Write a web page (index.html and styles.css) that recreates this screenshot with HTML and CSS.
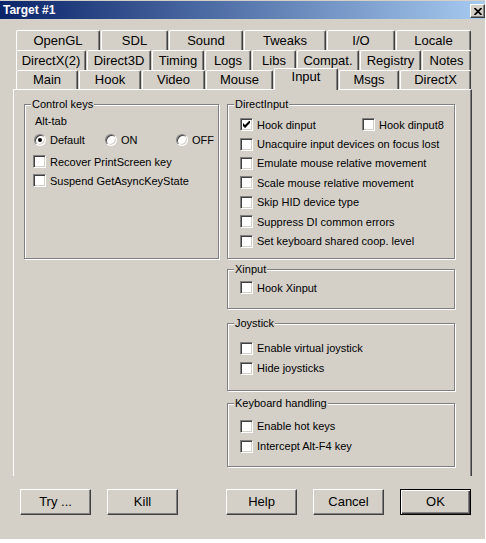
FILE: index.html
```html
<!DOCTYPE html>
<html lang="en">
<head>
  <meta charset="UTF-8">
  <title>Target #1</title>
  <link rel="stylesheet" href="styles.css">
</head>
<body>

  <div class="dialog">
    <div class="titlebar">
      <span class="title">Target #1</span>
      <span class="close">
        <svg width="8" height="7" viewBox="0 0 8 7"><path d="M0.5 0 L7.5 7 M7.5 0 L0.5 7" stroke="#000" stroke-width="1.7" fill="none"/></svg>
      </span>
    </div>

    <div class="tabs">
      <div class="tabrow row1">
        <div class="tab">OpenGL</div>
        <div class="tab">SDL</div>
        <div class="tab">Sound</div>
        <div class="tab">Tweaks</div>
        <div class="tab">I/O</div>
        <div class="tab">Locale</div>
      </div>
      <div class="tabrow row2">
        <div class="tab">DirectX(2)</div>
        <div class="tab">Direct3D</div>
        <div class="tab">Timing</div>
        <div class="tab">Logs</div>
        <div class="tab">Libs</div>
        <div class="tab">Compat.</div>
        <div class="tab">Registry</div>
        <div class="tab">Notes</div>
      </div>
      <div class="tabrow row3">
        <div class="tab">Main</div>
        <div class="tab">Hook</div>
        <div class="tab">Video</div>
        <div class="tab">Mouse</div>
        <div class="tab selected">Input</div>
        <div class="tab">Msgs</div>
        <div class="tab">DirectX</div>
      </div>
    </div>

    <div class="panel">
      <div class="group control-keys">
        <span class="legend">Control keys</span>
        <div class="label">Alt-tab</div>
        <div class="radios">
          <div class="radio-item"><span class="radio on"></span>Default</div>
          <div class="radio-item"><span class="radio"></span>ON</div>
          <div class="radio-item"><span class="radio"></span>OFF</div>
        </div>
        <div class="check"><span class="box"></span>Recover PrintScreen key</div>
        <div class="check"><span class="box"></span>Suspend GetAsyncKeyState</div>
      </div>

      <div class="col-right">
        <div class="group directinput">
          <span class="legend">DirectInput</span>
          <div class="pair">
            <div class="check wide"><span class="box"><svg width="7" height="7" viewBox="0 0 7 7"><path d="M0 2 L2 4 L7 -1 L7 2 L2 7 L0 5 Z" fill="#000"/></svg></span>Hook dinput</div>
            <div class="check"><span class="box"></span>Hook dinput8</div>
          </div>
          <div class="check"><span class="box"></span>Unacquire input devices on focus lost</div>
          <div class="check"><span class="box"></span>Emulate mouse relative movement</div>
          <div class="check"><span class="box"></span>Scale mouse relative movement</div>
          <div class="check"><span class="box"></span>Skip HID device type</div>
          <div class="check"><span class="box"></span>Suppress DI common errors</div>
          <div class="check"><span class="box"></span>Set keyboard shared coop. level</div>
        </div>

        <div class="group xinput">
          <span class="legend">Xinput</span>
          <div class="check"><span class="box"></span>Hook Xinput</div>
        </div>

        <div class="group joystick">
          <span class="legend">Joystick</span>
          <div class="check"><span class="box"></span>Enable virtual joystick</div>
          <div class="check"><span class="box"></span>Hide joysticks</div>
        </div>

        <div class="group keyboard">
          <span class="legend">Keyboard handling</span>
          <div class="check"><span class="box"></span>Enable hot keys</div>
          <div class="check"><span class="box"></span>Intercept Alt-F4 key</div>
        </div>
      </div>
    </div>

    <div class="buttons">
      <div class="btn">Try ...</div>
      <div class="btn">Kill</div>
      <div class="btn spaced">Help</div>
      <div class="btn">Cancel</div>
      <div class="btn default">OK</div>
    </div>
  </div>

</body>
</html>
```

FILE: styles.css
```css
html, body {
  margin: 0;
  padding: 0;
  background: #fff;
  font-family: "Liberation Sans", Arial, sans-serif;
  color: #000;
}

.dialog {
  width: 485px;
  height: 539px;
  box-sizing: border-box;
  padding-top: 1px;
  background: #d4d0c8;
}

.titlebar {
  height: 18px;
  display: flex;
  align-items: flex-start;
  background: linear-gradient(to right, #0a246a, #a6caf0);
}

.title {
  color: #fff;
  font-weight: bold;
  font-size: 12px;
  line-height: 18px;
  padding-left: 3px;
}

.close {
  margin: 3px 0 0 auto;
  width: 15px;
  height: 14px;
  box-sizing: border-box;
  background: #d4d0c8;
  border: 1px solid;
  border-color: #fff #404040 #404040 #fff;
  box-shadow: inset -1px -1px #808080;
  display: flex;
  align-items: center;
  justify-content: center;
}

/* tabs */

.tabs {
  margin: 11px 0 0 16px;
  width: 455px;
}

.tabrow {
  display: grid;
  column-gap: 1px;
  height: 20px;
  font-size: 13px;
}

.row1 { grid-template-columns: 84px 67px 74px 82px 68px 75px; }
.row2 { grid-template-columns: 70px 64px 52px 46px 44px 62px 61px 49px; }
.row3 { grid-template-columns: 62px 62px 63px 67px 64px 60px 71px; height: 19px; }

.tab {
  box-sizing: border-box;
  border-top: 1px solid #fff;
  border-left: 1px solid #fff;
  border-right: 1px solid #404040;
  border-radius: 2px 2px 0 0;
  box-shadow: inset -1px 0 #808080;
  text-align: center;
  line-height: 19px;
  white-space: nowrap;
}

.row3 .tab {
  line-height: 18px;
}

.row3 .tab.selected {
  position: relative;
  z-index: 1;
  margin-top: -2px;
  margin-bottom: -1px;
  background: #d4d0c8;
  line-height: 16px;
}

/* panel */

.panel {
  margin-left: 13px;
  width: 459px;
  height: 387px;
  box-sizing: border-box;
  border-top: 1px solid #fff;
  border-left: 1px solid #fff;
  border-right: 1px solid #404040;
  box-shadow: inset -1px 0 #808080;
  padding: 14px 0 0 10px;
  display: flex;
  align-items: flex-start;
  gap: 8px;
  font-size: 11px;
}

.group {
  position: relative;
  flex: none;
  box-sizing: border-box;
  border: 1px solid #808080;
  box-shadow: inset 1px 1px #fff, 1px 1px #fff;
}

.legend {
  position: absolute;
  top: -7px;
  left: 6px;
  padding: 0 1px;
  background: #d4d0c8;
  line-height: 13px;
  white-space: nowrap;
}

.control-keys {
  width: 195px;
  height: 155px;
  padding: 7px 0 0 8px;
}

.label {
  height: 18px;
  line-height: 18px;
  margin-left: 2px;
}

.radios {
  display: flex;
  align-items: center;
  height: 19px;
}

.radio-item {
  flex: none;
  width: 71px;
  display: flex;
  align-items: center;
}

.radio-item:last-child {
  width: auto;
}

.radio {
  position: relative;
  width: 12px;
  height: 12px;
  box-sizing: border-box;
  margin: 0 4px 0 1px;
  border-radius: 50%;
  background: #fff;
  border: 1px solid;
  border-color: #808080 #fff #fff #808080;
  box-shadow: inset 1px 1px #404040, inset -1px -1px #d4d0c8;
}

.radio.on::after {
  content: "";
  position: absolute;
  left: 3px;
  top: 3px;
  width: 4px;
  height: 4px;
  border-radius: 50%;
  background: #000;
}

.check {
  display: flex;
  align-items: center;
  height: 19px;
  white-space: nowrap;
}

.control-keys .radios + .check {
  margin-top: 3px;
}

.box {
  flex: none;
  width: 13px;
  height: 13px;
  box-sizing: border-box;
  margin-right: 4px;
  background: #fff;
  border: 1px solid;
  border-color: #808080 #fff #fff #808080;
  box-shadow: inset 1px 1px #404040, inset -1px -1px #d4d0c8;
  display: flex;
  align-items: center;
  justify-content: center;
}

.col-right {
  width: 228px;
  display: flex;
  flex-direction: column;
}

.directinput {
  height: 155px;
  padding: 10px 0 0 12px;
}

.directinput .check {
  height: 19.4px;
}

.pair {
  display: flex;
}

.check.wide {
  width: 122px;
}

.xinput {
  height: 40px;
  margin-top: 10px;
  padding: 8px 0 0 12px;
}

.joystick {
  height: 68px;
  margin-top: 14px;
  padding: 14px 0 0 12px;
}

.keyboard {
  height: 64px;
  margin-top: 12px;
  padding: 12px 0 0 12px;
}

.joystick .check,
.keyboard .check {
  height: 20px;
}

/* bottom buttons */

.buttons {
  display: flex;
  gap: 16px;
  margin: 13px 0 0 20px;
}

.btn {
  width: 71px;
  height: 26px;
  box-sizing: border-box;
  border: 1px solid;
  border-color: #fff #404040 #404040 #fff;
  box-shadow: inset -1px -1px #808080;
  font-size: 13px;
  line-height: 24px;
  text-align: center;
}

.btn.spaced {
  margin-left: 32px;
}

.btn.default {
  border-color: #000;
  box-shadow: inset 1px 1px #fff, inset -1px -1px #404040, inset -2px -2px #808080;
}
```
